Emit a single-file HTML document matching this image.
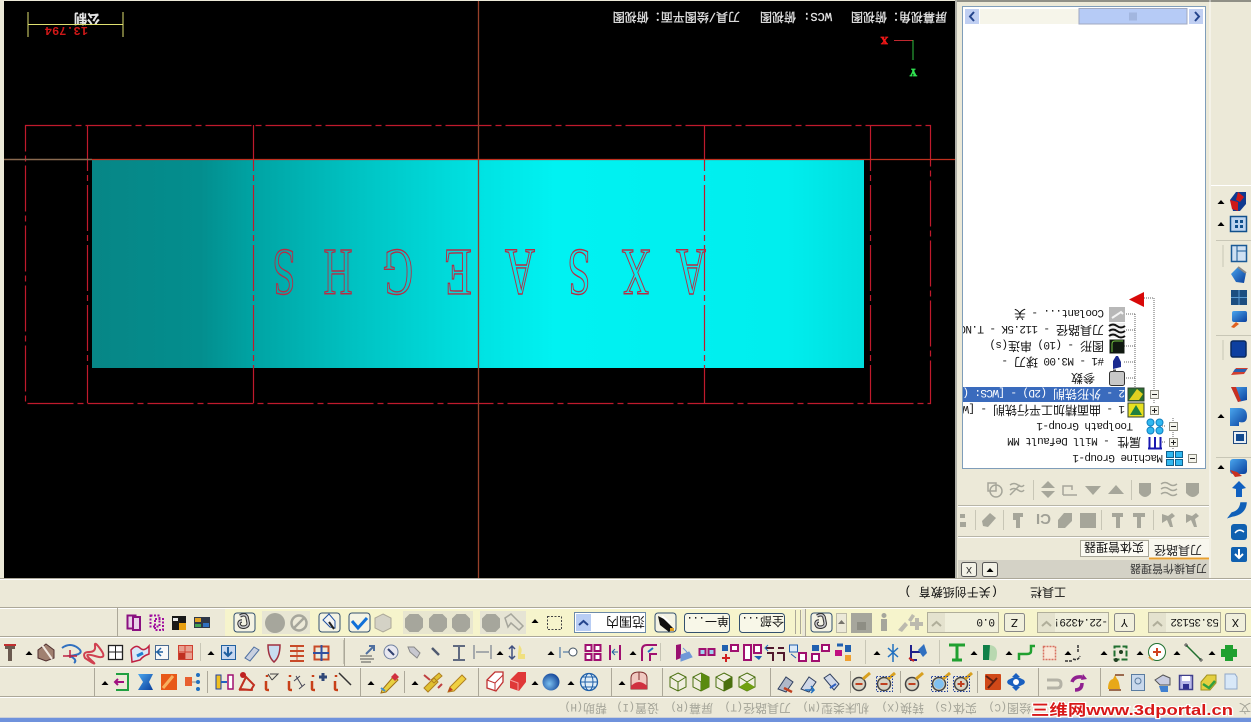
<!DOCTYPE html>
<html><head><meta charset="utf-8"><style>
html,body{margin:0;padding:0;width:1251px;height:722px;overflow:hidden;background:#ece9d8}
svg{display:block;filter:blur(.3px)}
text{font-family:"Liberation Mono","WenQuanYi Zen Hei","Noto Sans CJK SC",monospace;font-size:12px;fill:#111}
.l{font-size:11px;letter-spacing:-.6px}
.w{fill:#e4e4e4;stroke:#e4e4e4;stroke-width:.25}
.g{fill:#a4a498}
.b{fill:#222}
.n{font-size:67px;font-family:"Liberation Serif",serif;fill:none;stroke:#b82c44;stroke-width:1.400}
</style></head><body>
<svg width="1251" height="722" viewBox="0 0 1251 722" xmlns="http://www.w3.org/2000/svg">
<defs>
<linearGradient id="cy" x1="0" x2="1" y1="0" y2="0">
<stop offset="0" stop-color="#078686"/><stop offset=".14" stop-color="#038e8e"/><stop offset=".21" stop-color="#00a4a4"/><stop offset=".34" stop-color="#00c2c2"/><stop offset=".5" stop-color="#00e2e2"/><stop offset=".6" stop-color="#00f2f2"/><stop offset=".9" stop-color="#00eeee"/><stop offset="1" stop-color="#00dede"/>
</linearGradient>
<linearGradient id="bl" x1="0" x2="1" y1="0" y2="1"><stop offset="0" stop-color="#4aa6ee"/><stop offset="1" stop-color="#0a3f9c"/></linearGradient>
<radialGradient id="sp" cx=".4" cy=".6" r=".7"><stop offset="0" stop-color="#7cc0f0"/><stop offset="1" stop-color="#0a3a90"/></radialGradient>
<path id="tri" d="M-3.500 2L0-2 3.500 2z" fill="#000"/>
<path id="hx" d="M-5-10H5L10-5V5L5 10H-5L-10 5V-5z" fill="#a6a69c"/>
<rect id="bt" x="-10.500" y="-9.500" width="21" height="19" rx="3" fill="#f4f3e4" stroke="#33506e"/>
<g id="link"><path id="lk" d="M-5-6q5-3 7 1l1 5q1 4-3 5-5 1-6-3 0-3 3-3" fill="none" stroke="#333" stroke-width="3.500"/><path d="M-5-6q5-3 7 1l1 5q1 4-3 5-5 1-6-3 0-3 3-3" fill="none" stroke="#c8c8cc" stroke-width="1.500"/></g>
<g id="eye"><circle r="6.500" fill="#d8d4c4" stroke="#444" stroke-width="1.500"/><rect x="-3.500" y="-1" width="7" height="2" fill="#c04020"/><path d="M4-5L11-11" stroke="#d8a020" stroke-width="3"/></g>
<g id="cube"><path d="M0-9L8-5V5L0 9-8 5V-5z" fill="#f0eee0" stroke="#4a7010"/><path d="M0 0L8-5M0 0L-8-5M0 0V9" stroke="#4a7010" fill="none"/></g>
</defs>

<!-- base -->
<rect width="1251" height="722" fill="#ece9d8"/>
<!-- viewport -->
<rect x="4" y="1" width="951" height="577" fill="#000"/>
<rect x="92" y="160" width="772" height="208" fill="url(#cy)"/>
<g fill="none" stroke="#c01a2c" stroke-width="1.200" stroke-dasharray="46 4 6 4">
<path d="M25.500 125.500H930.500V403.500H25.500z"/>
<path d="M87.500 125V403M253.500 125V403M704.500 125V403M870.500 125V403"/>
</g>
<path d="M478.500 1V578" stroke="#98402a" stroke-width="1.300"/>
<path d="M92 159.500H955" stroke="#c0301e" stroke-width="1.300"/>
<path d="M4 159.500H92" stroke="#8a6a50" stroke-width="1.500"/>

<!-- letters -->
<text class="n" transform="translate(284,250) rotate(180) scale(.62,1)" text-anchor="middle">S</text>
<text class="n" transform="translate(338,250) rotate(180) scale(.6,1)" text-anchor="middle">H</text>
<text class="n" transform="translate(398,250) rotate(180) scale(.62,1)" text-anchor="middle">G</text>
<text class="n" transform="translate(458,250) rotate(180) scale(.68,1)" text-anchor="middle">E</text>
<text class="n" transform="translate(520,250) rotate(180) scale(.62,1)" text-anchor="middle">A</text>
<text class="n" transform="translate(579,250) rotate(180) scale(.62,1)" text-anchor="middle">S</text>
<text class="n" transform="translate(636,250) rotate(180) scale(.6,1)" text-anchor="middle">X</text>
<text class="n" transform="translate(691,250) rotate(180) scale(.62,1)" text-anchor="middle">A</text>

<!-- viewport texts -->
<text class="w" transform="translate(947,13) rotate(180)">屏幕视角：俯视图</text>
<text class="w" transform="translate(832,13) rotate(180)"><tspan style="font-size:12px">WCS:</tspan> 俯视图</text>
<text class="w" transform="translate(740,13) rotate(180)">刀具/绘图平面：俯视图</text>
<text class="w" transform="translate(100,14) rotate(180)" style="font-size:13px;font-weight:bold">公制</text>
<text transform="translate(88,27) rotate(180)" style="fill:#d01818;font-size:12px;font-weight:bold">13.794</text>
<path d="M28 24.500H123M28 12V37M123 12V37" stroke="#e0e070" fill="none"/>
<!-- axes -->
<path d="M894 40.500H913" stroke="#c02830"/><path d="M913 40V60" stroke="#30c040"/>
<text transform="translate(888,37) rotate(180)" style="fill:#f01818;stroke:#f01818;stroke-width:.8;font-size:10px;font-weight:bold;font-family:'Liberation Serif',serif">X</text>
<text transform="translate(917,69) rotate(180)" style="fill:#30e050;stroke:#30e050;stroke-width:.8;font-size:10px;font-weight:bold;font-family:'Liberation Serif',serif">Y</text>

<!-- right panel -->
<rect x="955" y="0" width="296" height="2" fill="#8f8f86"/>
<rect x="955" y="0" width="2" height="578" fill="#b0b0a8"/>
<rect x="957" y="2" width="253" height="578" fill="#ece9d8"/>
<path d="M1210 0V580" stroke="#fff" stroke-opacity=".8"/>
<rect x="962.500" y="6.500" width="243" height="462" fill="#fff" stroke="#7f9db9"/>
<!-- h scrollbar -->
<rect x="980" y="9" width="99" height="15" fill="#f6f5ea"/>
<rect x="1079" y="8.500" width="108" height="15.500" fill="#b6cbf6" stroke="#a0a8c0"/>
<path d="M1130 12.500v8M1132 12.500v8M1134 12.500v8M1136 12.500v8" stroke="#8ea0c8"/>
<rect x="965" y="9" width="14" height="15" fill="#c0cff2"/><rect x="1189" y="9" width="14" height="15" fill="#c0cff2"/>
<path d="M974 12L970 16.500 974 21" fill="none" stroke="#24448c" stroke-width="2"/>
<path d="M1195 12L1199 16.500 1195 21" fill="none" stroke="#24448c" stroke-width="2"/>

<!-- tree -->
<g stroke="#666" stroke-dasharray="1 1" fill="none">
<path d="M1154 298V404M1135 314V388M1173 418V450M1144 298H1154M1124 314H1135M1124 330H1135M1124 346H1135M1124 362H1135M1124 378H1135M1160 442H1165M1160 426H1165"/>
</g>
<rect x="963" y="387" width="162" height="15" fill="#3a6bbd"/>
<path d="M1129 299.500L1144 292V307z" fill="#d80808"/>
<clipPath id="tc"><rect x="963" y="290" width="240" height="178"/></clipPath>
<g clip-path="url(#tc)">
<text transform="translate(1163,455) rotate(180)"><tspan class="l">Machine Group-1</tspan></text>
<text transform="translate(1141,438) rotate(180)">属性 <tspan class="l">- Mill Default MM</tspan></text>
<text transform="translate(1133,423) rotate(180)"><tspan class="l">Toolpath Group-1</tspan></text>
<text transform="translate(1125,406) rotate(180)"><tspan class="l">1 - </tspan>曲面精加工平行铣削<tspan class="l"> - [WCS</tspan></text>
<text transform="translate(1125,390) rotate(180)" style="fill:#fff"><tspan class="l" style="fill:#fff">2 - </tspan>外形铣削<tspan class="l" style="fill:#fff"> (2D) - [WCS: (</tspan></text>
<text transform="translate(1095,374) rotate(180)">参数</text>
<text transform="translate(1104,358) rotate(180)"><tspan class="l">#1 - M3.00 </tspan>球刀<tspan class="l"> -</tspan></text>
<text transform="translate(1104,342) rotate(180)">图形<tspan class="l"> - (10) </tspan>串连<tspan class="l">(s)</tspan></text>
<text transform="translate(1104,326) rotate(180)">刀具路径<tspan class="l"> - 112.5K - T.NC</tspan></text>
<text transform="translate(1104,310) rotate(180)"><tspan class="l">Coolant... - </tspan>关</text>
</g>
<!-- tree boxes -->
<g fill="#f4f4ec" stroke="#8a8a80">
<rect x="1188.500" y="454.500" width="8" height="8"/><rect x="1169.500" y="438.500" width="8" height="8"/><rect x="1169.500" y="422.500" width="8" height="8"/><rect x="1150.500" y="406.500" width="8" height="8"/><rect x="1150.500" y="390.500" width="8" height="8"/>
</g>
<path d="M1190 458.500h5M1171 442.500h5M1173.500 440v5M1171 426.500h5M1152 410.500h5M1154.500 408v5M1152 394.500h5" stroke="#222"/>
<!-- tree icons -->
<g fill="#30b8f0" stroke="#10608c"><rect x="1166.500" y="451.500" width="7" height="6"/><rect x="1175.500" y="451.500" width="7" height="6"/><rect x="1166.500" y="459.500" width="7" height="6"/><rect x="1175.500" y="459.500" width="7" height="6"/></g>
<path d="M1148 448.500h14M1149.500 437v11M1155 437v11M1160.500 437v11" stroke="#1818b0" stroke-width="2" fill="none"/>
<g fill="#30b8f0" stroke="#1080c0"><circle cx="1150.500" cy="422.500" r="3.500"/><circle cx="1159.500" cy="422.500" r="3.500"/><circle cx="1150.500" cy="430.500" r="3.500"/><circle cx="1159.500" cy="430.500" r="3.500"/></g>
<path d="M1128 403h16v14h-16z" fill="#e8e020" stroke="#304030"/><path d="M1130 415l6-10 6 10z" fill="#208040"/>
<path d="M1128 388h16v13h-16z" fill="#2a7030" stroke="#304030"/><path d="M1129 400l8-11 6 5-4 6z" fill="#e0d020"/>
<rect x="1109.500" y="371.500" width="15" height="14" rx="2" fill="#c8c8c8" stroke="#333"/>
<path d="M1113 369.500h3v2h-3z" fill="#555"/>
<path d="M1113 369l8-2v-5l-3-6h-2l-3 5z" fill="#1a2a90"/>
<rect x="1109.500" y="339.500" width="15" height="14" fill="#101810"/><path d="M1112 352v-8q0-3 3-3h8" stroke="#70c040" fill="none"/>
<rect x="1109" y="323" width="16" height="15" fill="#f0f0f0"/><path d="M1109 326q4-3 8 0t8 0M1109 331q4-3 8 0t8 0M1109 336q4-3 8 0t8 0" stroke="#111" stroke-width="2" fill="none"/>
<rect x="1109" y="307" width="16" height="15" fill="#b8b8b8"/><path d="M1112 318l9-6 2 2" stroke="#f4f4f4" stroke-width="2" fill="none"/>

<!-- panel toolbars -->
<path d="M958 505.500H1209M958 536.500H1209" stroke="#b8b6a8"/>
<path d="M958 506.500H1209M958 537.500H1209" stroke="#fff"/>
<path d="M1131.500 480v20M1033.500 480v20M1153.500 510v20M1101.500 510v20M1003.500 510v20M975.500 510v20" stroke="#c8c6b6"/>
<g fill="#a6a69a" stroke="none">
<path d="M1186 483h13v10q-6 8-13 0z"/><path d="M1139 483h12v10q-6 8-12 0z"/>
<path d="M1108 494L1116 485 1124 494z"/><path d="M1085 486H1101L1093 495z"/>
<path d="M1041 488h14l-7-7zM1041 491h14l-7 7z"/>
<path d="M1186 514l6 2 4-3 3 3-4 3 2 8h-3l-3-7-5 3zM1162 514l6 2 4-3 3 3-4 3 2 8h-3l-3-7-5 3z"/>
<path d="M1133 513h12v4h-4v11h-4v-11h-4zM1112 513h11v4h-3v11h-4v-11h-4z"/>
<rect x="1080" y="513" width="16" height="15"/>
<path d="M1058 520l6-7h8v8l-7 7h-7z"/>
<path d="M1013 513h10v4h-3v11h-4v-8h-3z"/>
<path d="M982 521l8-8 6 5-8 9-5-1z"/>
<path d="M960 514h5v4h-5zM960 522h6v5h-6z"/>
</g>
<g fill="none" stroke="#a6a69a" stroke-width="1.500">
<path d="M1161 484q4-3 8 0t8 0M1161 489q4-3 8 0t8 0M1161 494q4-3 8 0t8 0"/>
<path d="M1063 495h14M1063 495v-9h9v4"/>
<path d="M1010 485q4-3 8 0t6 0M1010 490q4-3 8 0t6 0M1010 495l10-10"/>
<circle cx="996" cy="491" r="6"/><rect x="988" y="483" width="8" height="8"/>
</g>
<text transform="translate(1051,514) rotate(180)" style="fill:#a0a096;font-weight:bold;font-size:15px;font-family:'Liberation Sans',sans-serif">CI</text>

<!-- tabs -->
<rect x="958" y="538" width="122" height="21" fill="#ece9d8"/>
<rect x="1080.500" y="540.500" width="68" height="16" fill="#fbfaf2" stroke="#a8a698"/>
<rect x="1149" y="539" width="60" height="19" fill="#f8f7ee"/>
<path d="M1149 558.500H1209" stroke="#e8a030" stroke-width="2"/>
<text class="b" transform="translate(1202,546) rotate(180)">刀具路径</text>
<text transform="translate(1144,543) rotate(180)">实体管理器</text>
<!-- panel title -->
<rect x="958" y="560" width="251" height="18" fill="#d4d2c6"/>
<text transform="translate(1207,565) rotate(180)" style="font-size:11px;fill:#333">刀具操作管理器</text>
<rect x="961.500" y="562.500" width="15" height="14" rx="2" fill="#f2f1e6" stroke="#555"/>
<rect x="982.500" y="562.500" width="15" height="14" rx="2" fill="#f2f1e6" stroke="#555"/>
<text transform="translate(972,567) rotate(180)" style="font-size:10px;fill:#222">X</text>
<use href="#tri" x="990" y="570"/>

<!-- right vertical toolbar -->
<rect x="1211" y="186" width="40" height="394" fill="#ece9d8"/>
<path d="M1211 185.500h40" stroke="#fff"/>
<path d="M1216 240.500h35M1216 335.500h35M1216 457.500h35M1223 245v22M1223 340v20" stroke="#c8c6b6"/>
<use href="#tri" x="1221" y="202"/><use href="#tri" x="1221" y="224"/><use href="#tri" x="1221" y="416"/><use href="#tri" x="1221" y="467"/>
<g>
<path d="M1230 200l6-8h10v12l-6 7h-7z" fill="#0f3a90"/><path d="M1230 200l8 2v9l-6-2z" fill="#d01818"/><path d="M1238 192l6 5-4 5-4-2z" fill="#d01818"/>
<rect x="1230.500" y="216.500" width="16" height="15" fill="#bcd4f0" stroke="#10508c" stroke-width="1.500"/><path d="M1235 220h3v3h-3zM1240 220h3v3h-3zM1235 225h3v3h-3zM1240 225h3v3h-3z" fill="#10508c"/>
<rect x="1231.500" y="245.500" width="15" height="16" fill="#cfe0f2" stroke="#1a5a96" stroke-width="1.500"/><path d="M1237 246v15M1237 251h9" stroke="#1a5a96"/>
<path d="M1231 274l7-7 8 6-2 10-8-1z" fill="url(#bl)"/><path d="M1238 267l8 6" stroke="#888" stroke-width="2"/>
<rect x="1231" y="290" width="16" height="15" fill="#1c4e80"/><path d="M1231 297.500h16M1239 290v15" stroke="#5a9ad0"/>
<rect x="1232" y="311" width="15" height="11" rx="2" fill="url(#bl)"/><path d="M1231 327l5-5 3 2-5 4z" fill="#e06020"/>
<rect x="1231" y="341" width="15" height="16" rx="2" fill="#0d3fa0" stroke="#0a2a60" stroke-width="1.500"/>
<path d="M1231 375l5-7h12l-4 6z" fill="#d04030"/><path d="M1235 369h12l-2 3h-12z" fill="#2860b0"/>
<path d="M1231 387h16v13l-9 2z" fill="url(#bl)"/><path d="M1231 387l7 15 3-1-5-14z" fill="#c83020"/>
<path d="M1230 408h9q8 0 8 8t-8 6v4h-9z" fill="url(#bl)"/>
<rect x="1233.500" y="431.500" width="13" height="12" fill="#e8eef4" stroke="#204a80"/><rect x="1236" y="434" width="8" height="7" fill="#104a90"/>
<rect x="1230" y="459" width="17" height="15" rx="3" fill="url(#bl)"/><path d="M1230 470l5 7 7-1-5-4z" fill="#c83020"/>
<path d="M1239 481l7 7-4 1v8h-6v-8l-4-1z" fill="#1060c0"/>
<path d="M1246 503q-1 11-14 13l-3 1 3-4q8-2 9-10z" fill="#1060b8" stroke="#1060b8" stroke-width="1.500"/>
<rect x="1231" y="524" width="16" height="16" rx="3" fill="#1060b0"/><path d="M1235 533q4-5 9-1" stroke="#fff" fill="none" stroke-width="1.500"/>
<rect x="1231" y="547" width="16" height="15" rx="2" fill="#1060b0"/><path d="M1239 549v9M1235 554l4 4 4-4" stroke="#fff" fill="none" stroke-width="2"/>
</g>

<!-- status text row -->
<path d="M0 578.500H1251" stroke="#aca899"/><path d="M0 579.500H1251" stroke="#fff"/>
<text transform="translate(1066,588) rotate(180)">工具栏</text>
<text transform="translate(998,588) rotate(180)">(关于创纸教育 )</text>

<!-- toolbar rows -->
<path d="M0 607.500H1251" stroke="#aca899"/><path d="M0 608.500H1251" stroke="#fff"/>
<rect x="117" y="609" width="107" height="27" fill="#ece9d8"/>
<rect x="225" y="609" width="1026" height="27" fill="#f6f4cc"/>
<path d="M117.500 608V636M795.500 610V634M800.500 610V634M805.500 609V636" stroke="#aca899"/>
<rect x="802" y="609" width="3" height="27" fill="#ece9d8"/>
<path d="M0 636.500H1251M0 666.500H1251M0 696.500H1251" stroke="#aca899"/>
<path d="M0 637.500H1251M0 667.500H1251M0 697.500H1251" stroke="#fff"/>

<!-- row1 -->
<rect x="127.500" y="615.500" width="8" height="13" fill="#e8d0e8" stroke="#8a1080" stroke-width="2"/><rect x="133" y="617" width="7" height="13" fill="#e8d0e8" stroke="#8a1080" stroke-width="2"/>
<rect x="150.500" y="615.500" width="9" height="11" fill="none" stroke="#a010a0" stroke-width="2" stroke-dasharray="2 1.500"/><rect x="155" y="619" width="8" height="11" fill="none" stroke="#a010a0" stroke-width="2" stroke-dasharray="2 1.500"/>
<rect x="172" y="616" width="14" height="14" fill="#181818"/><path d="M179 623h7v7h-7z" fill="#e8a010"/><path d="M173 618h5v3h-5z" fill="#e8e8e8"/>
<rect x="194" y="617" width="16" height="11" fill="#303848"/><path d="M195 618h6v4h-6z" fill="#e0a020"/><path d="M203 623h6v4h-6z" fill="#3070c0"/><path d="M195 624h6v3h-6z" fill="#40a050"/>
<use href="#bt" x="244.500" y="622.500"/><use href="#link" x="245" y="622"/>
<rect x="262" y="611" width="48" height="23" fill="#e8e6d4"/>
<circle cx="275" cy="623" r="10" fill="#a6a69c"/>
<circle cx="299" cy="623" r="7.500" fill="#ece9d8" stroke="#a6a69c" stroke-width="2.500"/><path d="M294 628l10-10" stroke="#a6a69c" stroke-width="2.500"/>
<use href="#bt" x="329.500" y="622.500"/><path d="M323 620l6-6 6 7v7l-5-1-6-6z" fill="#f4f4f4" stroke="#2050a0"/><path d="M329 622l5 7" stroke="#222" stroke-width="2"/>
<use href="#bt" x="359.500" y="622.500"/><path d="M352 621l6 7 9-10" fill="none" stroke="#1070d8" stroke-width="3"/>
<path d="M383 614l8 4v10l-8 4-8-4v-10z" fill="#d4d2c6" stroke="#aca899"/>
<rect x="403" y="611" width="70" height="23" fill="#e8e6d0"/><rect x="480" y="611" width="46" height="23" fill="#e6e4d4"/>
<use href="#hx" transform="translate(414,623) scale(.9)"/><use href="#hx" transform="translate(438,623) scale(.9)"/><use href="#hx" transform="translate(461,623) scale(.9)"/><use href="#hx" transform="translate(491,623) scale(.9)"/>
<path d="M505 618l6-4 12 12-4 4-8-7-3 4z" fill="#e4e2d4" stroke="#a6a69c" stroke-width="1.500"/>
<use href="#tri" x="535" y="621"/>
<rect x="547.500" y="616.500" width="14" height="13" fill="none" stroke="#444" stroke-dasharray="2 1.500"/>
<rect x="574.500" y="612.500" width="71" height="20" fill="#fff" stroke="#6c8aa8"/>
<rect x="576" y="614" width="15" height="17" fill="#b8cdf4"/><path d="M579 625l4.500-4 4.500 4" fill="none" stroke="#24448c" stroke-width="2"/>
<text transform="translate(645,617) rotate(180)" style="font-size:13px">范围内</text>
<use href="#bt" x="665.500" y="622.500"/><path d="M658 616l6 3 9 9-4 4-9-7z" fill="#111"/><path d="M662 616l8 7" stroke="#fff" stroke-width="2"/><path d="M670 628h4v3h-4z" fill="#e0a020"/>
<rect x="684.500" y="613.500" width="45" height="19" rx="3" fill="#f8f7e8" stroke="#33506e"/>
<rect x="739.500" y="613.500" width="45" height="19" rx="3" fill="#f8f7e8" stroke="#33506e"/>
<text transform="translate(729,617) rotate(180)">单一<tspan class="l">...</tspan></text>
<text transform="translate(784,617) rotate(180)">全部<tspan class="l">...</tspan></text>
<use href="#bt" x="821.500" y="622.500"/><use href="#link" x="822" y="622"/>
<rect x="836.500" y="613.500" width="10" height="19" fill="#ece9d8" stroke="#bcbaa8"/><use href="#tri" x="841.500" y="622" opacity=".5"/>
<rect x="851" y="613" width="21" height="20" fill="#a6a69c"/><path d="M857 622h9v8h-9z" fill="#8e8e84"/>
<path d="M884 613a2.500 2.500 0 1 1 0 5 2.500 2.500 0 0 1 0-5zM881 619h6v12h-6z" fill="#a6a69c"/>
<path d="M898 630l7-8 3 3-6 7zM908 620l4-6 3 2-4 6zM910 622h5v-4h4v4h4v4h-4v4h-4v-4h-5z" fill="#bcbaae"/>
<!-- fields -->
<g fill="#f0efdc" stroke="#b0ae9a">
<rect x="927.500" y="612.500" width="71" height="20"/><rect x="1037.500" y="612.500" width="71" height="20"/><rect x="1148.500" y="612.500" width="72" height="20"/>
<rect x="1004.500" y="613.500" width="20" height="18" rx="2" stroke="#888"/><rect x="1114.500" y="613.500" width="20" height="18" rx="2" stroke="#888"/><rect x="1225.500" y="613.500" width="20" height="18" rx="2" stroke="#888"/>
</g>
<g fill="#e4e2ce"><rect x="928" y="613" width="17" height="19"/><rect x="1038" y="613" width="17" height="19"/><rect x="1149" y="613" width="17" height="19"/></g>
<path d="M932 626l4.500-4 4.500 4M1042 626l4.500-4 4.500 4M1153 626l4.500-4 4.500 4" fill="none" stroke="#b0ae9a" stroke-width="2"/>
<text transform="translate(995,619) rotate(180)"><tspan class="l">0.0</tspan></text>
<text transform="translate(1108,619) rotate(180)"><tspan class="l">-22.4329!</tspan></text>
<text transform="translate(1219,619) rotate(180)"><tspan class="l">53.35132</tspan></text>
<text transform="translate(1018,619) rotate(180)" style="font-size:12px">Z</text>
<text transform="translate(1128,619) rotate(180)" style="font-size:12px">Y</text>
<text transform="translate(1239,619) rotate(180)" style="font-size:12px">X</text>

<!-- row2 -->
<path d="M343.500 640v24M865.500 640v24M939.500 640v24M200.500 643v18M660.500 643v18" stroke="#c8c6b6"/><path d="M344.500 638v28" stroke="#aca899"/>
<path d="M5 645h10v4h-3v12h-4v-12h-3z" fill="#6a5a50"/><path d="M4 645h12" stroke="#c03030" stroke-width="2"/>
<g><use href="#tri" x="29" y="653"/><use href="#tri" x="211" y="653"/><use href="#tri" x="500" y="653"/><use href="#tri" x="551" y="653"/><use href="#tri" x="633" y="653"/><use href="#tri" x="877" y="653"/><use href="#tri" x="974" y="653"/><use href="#tri" x="1009" y="653"/><use href="#tri" x="1068" y="653"/><use href="#tri" x="1104" y="653"/><use href="#tri" x="1140" y="653"/><use href="#tri" x="1177" y="653"/><use href="#tri" x="1212" y="653"/></g>
<path d="M38 650l8-6 8 6v8l-8 3-8-3z" fill="#a08070" stroke="#503030"/><path d="M42 645l10 14" stroke="#f0e8e0" stroke-width="2"/>
<path d="M62 648q8-6 16 0t-8 8q8 4 4 7" fill="none" stroke="#3070c0" stroke-width="2"/><path d="M63 656h14M70 650v8" stroke="#c02040" stroke-width="1.500"/>
<path d="M85 658q-3-6 4-6t6-6 6 4-6 6-4 4-6-2z" fill="none" stroke="#d04050" stroke-width="2"/>
<rect x="108.500" y="645.500" width="14" height="14" fill="#fff" stroke="#222" stroke-width="1.300"/><path d="M115.500 645v14M108 652h15" stroke="#222"/>
<path d="M131 650q5-6 9-2t9-2v8q-6 2-9 6l-8 2z" fill="#d8e8f8" stroke="#c02040" stroke-width="1.500"/><path d="M137 656l6-3" stroke="#2080d0" stroke-width="3"/>
<rect x="155.500" y="645.500" width="13" height="14" fill="#f8f8f8" stroke="#4a6a90"/><path d="M155 652h8M157 652l4-4M157 652l4 4" stroke="#2060a0" fill="none" stroke-width="1.500"/>
<rect x="178.500" y="645.500" width="14" height="14" fill="#e8a090" stroke="#d04030"/><path d="M185 645v15M178 652h15" stroke="#d04030"/><path d="M179 653h6v6h-6z" fill="#c03020"/>
<rect x="221.500" y="645.500" width="14" height="14" fill="#c8d8f0" stroke="#2060a0"/><path d="M228 647v8M224 652l4 4 4-4" stroke="#2060a0" fill="none" stroke-width="2"/>
<path d="M245 658l9-11 5 3-9 11z" fill="#c8d0e0" stroke="#5070a0"/>
<path d="M268 645h12q0 12-6 17-6-5-6-17z" fill="#c8dcf0" stroke="#a03040" stroke-width="1.500"/>
<path d="M290 646h14M290 651h14M290 656h14M290 661h14" stroke="#c84a28" stroke-width="2"/><path d="M297 645v17" stroke="#c84a28"/>
<rect x="314.500" y="646.500" width="14" height="13" fill="none" stroke="#c84a28" stroke-width="2"/><path d="M321.500 645v16M313 653h16" stroke="#3050a0" stroke-width="2"/>
<path d="M360 659h14M360 656h12M361 662h10" stroke="#555"/><path d="M366 654l8-8M369 646h5v5" stroke="#5070a0" fill="none" stroke-width="2"/>
<circle cx="391" cy="652" r="7" fill="#e8e8f0" stroke="#7080a0"/><path d="M388 649l6 6" stroke="#304070" stroke-width="2"/>
<path d="M408 647h6l6 6-3 5-7-6z" fill="#c8c8d0" stroke="#888"/>
<path d="M432 648l7 7" stroke="#505a70" stroke-width="2.500"/>
<path d="M453 646h12M453 660h12M459 647v12" stroke="#606a80" stroke-width="2"/>
<path d="M474 645v14M491 645v14M476 652h13" stroke="#606a80"/>
<path d="M512 646v13M509 649l3-3 3 3M509 656l3 3 3-3" stroke="#405080" fill="none" stroke-width="1.500"/><path d="M519 645q4 3 2 9h4v5h-7v-5" fill="#f0e080"/>
<path d="M560 647v11M563 652h6" stroke="#7090b0" stroke-width="1.500"/><circle cx="573" cy="652" r="4" fill="#fff" stroke="#405060"/>
<path d="M585.500 645h6v6h-6zM594.500 645h6v6h-6zM585.500 654h6v6h-6zM594.500 654h6v6h-6z" fill="#fff" stroke="#a01070" stroke-width="2"/>
<path d="M610 645v15M620 645v15" stroke="#a01070" stroke-width="2"/><path d="M612 652h6M612 652l3-3M612 652l3 3" stroke="#2060a0" fill="none"/>
<path d="M642 661v-11q0-5 5-5h10M650 661v-7h7" stroke="#a01070" stroke-width="2" fill="none"/><path d="M648 652l5-4" stroke="#2070c0" stroke-width="2"/>
<path d="M676 660v-15l5-1v14z" fill="#9a1070"/><path d="M681 655l8-3 3 5-11 4zM683 648l4 4" fill="#7098d8" stroke="#7098d8"/>
<path d="M699.500 649h6v6h-6zM708.500 649h6v6h-6z" fill="#a0d0f0" stroke="#a01070" stroke-width="2"/>
<path d="M722 645h6v6h-6z" fill="#2060b0"/><path d="M731 645h7v6h-7z" fill="#fff" stroke="#a01070" stroke-width="2"/><path d="M726 654v8M722 658h8" stroke="#d02020" stroke-width="2"/>
<rect x="744" y="645" width="7" height="15" fill="#fff" stroke="#a01070" stroke-width="2"/><rect x="754" y="645" width="7" height="8" fill="#fff" stroke="#a01070" stroke-width="2"/><path d="M754 656l5 4 3-4z" fill="#2060b0"/>
<path d="M766 648h8M778 648h6M767 653h6v8M777 653h7v8" stroke="#50182c" stroke-width="2" fill="none"/><path d="M768 645l-3 3 3 3" stroke="#2070c0" fill="none"/>
<path d="M789.500 645h8v7h-8z" fill="#dceaf8" stroke="#2060b0"/><path d="M799 653h7v8h-7z" fill="#fff" stroke="#a01070" stroke-width="2"/><path d="M791 654l5 4" stroke="#2060b0"/>
<path d="M812 645h7v6h-7z" fill="#2060b0"/><path d="M822 645h7v6h-7zM812 654h7v7h-7z" fill="#fff" stroke="#a01070" stroke-width="2"/>
<path d="M835 650h7v6h-7z" fill="#c01080"/><path d="M845 645h6v7h-6z" fill="#2060b0"/><path d="M845 655h6v6h-6z" fill="#f0a030"/><path d="M837 645h6" stroke="#2060b0" stroke-width="3"/>
<path d="M893 644v18M888 648l10 9M898 648l-10 9" stroke="#2070c0" stroke-width="1.500"/>
<path d="M911 645v16M911 652h9M911 660h6" stroke="#20208c" stroke-width="2"/><path d="M918 650l6-6 3 9-4 4z" fill="#3070c0"/><path d="M909 658l5 3" stroke="#c02020" stroke-width="2"/>
<path d="M949 645h16M957 645v15M952 660h10" stroke="#20a030" stroke-width="3" fill="none"/>
<path d="M983 645h6q3 0 3 4v8q0 3-3 3h-6z" fill="#108048"/><path d="M990 645q7 1 7 8t-3 8l-5-1z" fill="#b8d8b0"/>
<path d="M1019 660v-6h8q4 0 4-3v-5h4" fill="none" stroke="#20a030" stroke-width="2.500"/>
<rect x="1043.500" y="646.500" width="12" height="13" fill="#f8e8d8" stroke="#d87060" stroke-width="1.500" stroke-dasharray="2 1"/>
<path d="M1078 645v8M1073 659q5 2 7-3M1065 661h8" fill="none" stroke="#333" stroke-width="1.500" stroke-dasharray="3 1"/>
<rect x="1114.500" y="646.500" width="12" height="13" fill="none" stroke="#207030" stroke-width="2" stroke-dasharray="6 2"/><circle cx="1121" cy="652" r="2" fill="#204020"/><circle cx="1116" cy="660" r="2" fill="#204020"/>
<circle cx="1157" cy="652" r="8.500" fill="#fff" stroke="#207030"/><path d="M1157 648v8M1153 652h8" stroke="#d04020" stroke-width="2"/><path d="M1149 657l4 3" stroke="#e09030" stroke-width="2"/>
<path d="M1186 645l15 15" stroke="#207030" stroke-width="1.500"/><path d="M1184 645h4M1186 643v4M1199 660h4M1201 658v4" stroke="#555"/>
<path d="M1225 645h8v4h4v8h-4v4h-8v-4h-4v-8h4z" fill="#20a030"/>

<!-- row3 -->
<path d="M94.500 668v28M207.500 671v22M360.500 668v28M404.500 671v22M478.500 668v28M611.500 668v28M662.500 668v28M770.500 668v28M850.500 671v22M900.500 671v22M977.500 671v22M1038.500 668v28M1100.500 668v28" stroke="#aca899"/>
<use href="#tri" x="105" y="683"/><use href="#tri" x="371" y="683"/><use href="#tri" x="415" y="683"/><use href="#tri" x="535" y="683"/><use href="#tri" x="571" y="683"/><use href="#tri" x="622" y="683"/>
<path d="M116 674h12v16h-12" fill="none" stroke="#20a040" stroke-width="2"/><path d="M116 682h8M118 679l-3 3 3 3" stroke="#a01080" fill="none" stroke-width="2"/>
<path d="M138 674h15l-4 8 4 8h-15l5-8z" fill="url(#bl)"/>
<rect x="161" y="674" width="16" height="16" fill="#e85818"/><path d="M163 688l10-12" stroke="#f8b060" stroke-width="3"/>
<rect x="185" y="677" width="7" height="9" fill="#e86030"/><circle cx="198" cy="675" r="2" fill="#2070c0"/><circle cx="198" cy="682" r="2" fill="#2070c0"/><circle cx="198" cy="689" r="2" fill="#2070c0"/><path d="M192 682h4" stroke="#888"/>
<rect x="216" y="675" width="5" height="14" fill="#f0c020" stroke="#2040a0"/><rect x="228" y="675" width="5" height="14" fill="#fff" stroke="#a01070" stroke-width="1.500"/><path d="M221 682h6" stroke="#2060c0" stroke-width="2"/>
<circle cx="243" cy="675" r="3" fill="#c02020"/><path d="M240 689l6-12 8 8-3 5z" fill="none" stroke="#c03020" stroke-width="2"/><path d="M239 690h14" stroke="#c03020" stroke-width="1.500"/>
<g fill="none" stroke="#c84018" stroke-width="2.500"><path d="M266 681v8q0 1 3 1M267 675v2M289 681v8q0 1 3 1M290 675v2M312 681v8q0 1 3 1M313 675v2M335 681v8q0 1 3 1M336 675v2"/></g>
<path d="M272 680l6-6h-8M272 680l-4-6" fill="none" stroke="#444"/>
<path d="M296 676l6 10M294 681l6-5M299 689l6-5" fill="none" stroke="#445"/>
<path d="M319 677h8M323 673v8" stroke="#304878" stroke-width="3"/>
<path d="M339 673l12 12" stroke="#333" stroke-width="1.500"/>
<path d="M382 690l12-14 4 4-12 12-5 1z" fill="#e8d040" stroke="#a07018"/><path d="M391 677l4-4 4 4-4 4z" fill="#d03040"/><path d="M381 688l4 3" stroke="#4090d0" stroke-width="2"/>
<path d="M424 688l10-10 4 4-10 10zM431 680l8-7 3 3-8 7z" fill="#e0c030" stroke="#b08020"/><path d="M424 675l6 5M438 688l4-4" stroke="#c04040" stroke-width="2"/>
<path d="M448 692l2-5 12-12 4 4-12 12z" fill="#f0d040" stroke="#b08020"/><path d="M448 692l2-5 3 3z" fill="#c04020"/>
<path d="M487 680l8-8h8v10l-7 9-9-3z" fill="#fff" stroke="#c03030" stroke-width="1.300"/><path d="M487 680l8 3v8M495 683l8-8" stroke="#c03030" fill="none"/>
<path d="M510 680l8-8h8v10l-7 9-9-3z" fill="#e03838"/><path d="M510 680l8 3v8" stroke="#f4a0a0" fill="none"/>
<circle cx="551" cy="682" r="8.500" fill="url(#sp)"/>
<circle cx="589" cy="682" r="8.500" fill="#e0eef8" stroke="#2060a8" stroke-width="1.300"/><ellipse cx="589" cy="682" rx="4" ry="8.500" fill="none" stroke="#2060a8"/><path d="M581 682h16M582 677h14M582 687h14" stroke="#2060a8"/>
<path d="M631 689v-11q0-6 8-6t8 6v11z" fill="#f0c8c0" stroke="#803030"/><path d="M631 689h16v-3q-8-8-16 0z" fill="#d03040"/><path d="M639 672v8" stroke="#803030"/>
<use href="#cube" x="678" y="682"/>
<use href="#cube" x="701" y="682"/><path d="M701 682l8-5V687L701 691zM701 682v-9l8 4z" fill="#5a8a10"/>
<use href="#cube" x="724" y="682"/><path d="M724 682l8-5v10l-8 4z" fill="#4a7010"/>
<use href="#cube" x="747" y="682"/><path d="M747 682l8 5-8 4-8-4z" fill="#70a010"/>
<g><path d="M778 689l8-12 7 5-7 10z" fill="#b0b8c8" stroke="#304060"/><path d="M784 688l8 4" stroke="#c04020" stroke-width="2.500"/>
<path d="M801 689l8-12 7 5-7 10z" fill="#d0d8e8" stroke="#304060"/><path d="M805 690h8M811 686l3 4-3 3" stroke="#2070c0" fill="none" stroke-width="1.500"/>
<path d="M824 678l6-4 9 10-5 6z" fill="#d0d8e8" stroke="#304060"/><path d="M830 688l6-4" stroke="#3060c0" stroke-width="2"/></g>
<use href="#eye" x="859" y="684"/>
<use href="#eye" x="884" y="684"/><rect x="876.500" y="676.500" width="16" height="15" fill="none" stroke="#2040a0" stroke-dasharray="1.500 1.500"/>
<use href="#eye" x="912" y="684"/>
<use href="#eye" x="939" y="684"/><circle cx="939" cy="684" r="5" fill="#80c0f0"/><rect x="931.500" y="676.500" width="16" height="15" fill="none" stroke="#2040a0" stroke-dasharray="1.500 1.500"/>
<use href="#eye" x="961" y="684"/><path d="M961 681v6" stroke="#c04020" stroke-width="2"/><rect x="953.500" y="676.500" width="16" height="15" fill="none" stroke="#2040a0" stroke-dasharray="1.500 1.500"/>
<rect x="985" y="674" width="16" height="16" rx="1" fill="#d04818"/><path d="M986 676l8 6M988 688l9-10" stroke="#602010" stroke-width="2"/>
<path d="M1016 673l4 4h-2l6 3 1 2-1 2-6 3h2l-4 4-4-4h2l-6-3-1-2 1-2 6-3h-2z" fill="#1a60c0"/><circle cx="1016" cy="682" r="3" fill="#fff"/>
<path d="M1047 680h10q4 0 4 4t-4 4h-10" fill="none" stroke="#b4b2a6" stroke-width="3"/>
<path d="M1072 682q2-6 10-5M1082 683q0 7-7 7" fill="none" stroke="#902090" stroke-width="3.500"/><path d="M1083 674l4 5-6 1z" fill="#902090"/>
<path d="M1108 689q0-9 5-10l2-4 2 4q2 1 3 10z" fill="#e8a818"/><path d="M1115 675h9M1109 690h12" stroke="#804020" stroke-width="1.500"/>
<rect x="1131.500" y="674.500" width="13" height="16" fill="#c8d8ec" stroke="#5a7ca0"/><circle cx="1138" cy="681" r="3" fill="none" stroke="#5a7ca0"/>
<path d="M1155 680l8-5 7 3v7h-10z" fill="#c8cce0" stroke="#555"/><path d="M1159 686h9v6h-7z" fill="#4080d0"/>
<rect x="1179.500" y="675.500" width="13" height="14" fill="#b8b8e8" stroke="#40408c" stroke-width="1.500"/><rect x="1182" y="676" width="8" height="5" fill="#fff"/><rect x="1183" y="684" width="6" height="5" fill="#303090"/>
<path d="M1201 682l6-7h9v8l-6 7h-9z" fill="#e4d040" stroke="#a09020"/><path d="M1203 684l6 4 6-7" stroke="#30a040" fill="none" stroke-width="2.500"/>
<path d="M1225 674h10l2 3v12h-12z" fill="#d8e8f8" stroke="#90a8c8"/>

<!-- menu -->
<rect x="0" y="718" width="1251" height="4" fill="#6f92dc"/>
<path d="M0 717.500H1251" stroke="#cbd0d8"/>
<text class="g" transform="translate(607,704) rotate(180)">帮助<tspan class="l">(H)</tspan></text>
<text class="g" transform="translate(659,704) rotate(180)">设置<tspan class="l">(I)</tspan></text>
<text class="g" transform="translate(713,704) rotate(180)">屏幕<tspan class="l">(R)</tspan></text>
<text class="g" transform="translate(791,704) rotate(180)">刀具路径<tspan class="l">(T)</tspan></text>
<text class="g" transform="translate(869,704) rotate(180)">机床类型<tspan class="l">(M)</tspan></text>
<text class="g" transform="translate(924,704) rotate(180)">转换<tspan class="l">(X)</tspan></text>
<text class="g" transform="translate(977,704) rotate(180)">实体<tspan class="l">(S)</tspan></text>
<text class="g" transform="translate(1031,704) rotate(180)">绘图<tspan class="l">(C)</tspan></text>
<text class="g" transform="translate(1251,704) rotate(180)">文</text>
<text x="1031" y="715" style="font-family:'Liberation Sans','Noto Sans CJK SC',sans-serif;font-size:15px;font-weight:bold;fill:#d81818;stroke:#fff;stroke-width:2.200;paint-order:stroke" textLength="202" lengthAdjust="spacingAndGlyphs">三维网www.3dportal.cn</text>
</svg>
</body></html>
